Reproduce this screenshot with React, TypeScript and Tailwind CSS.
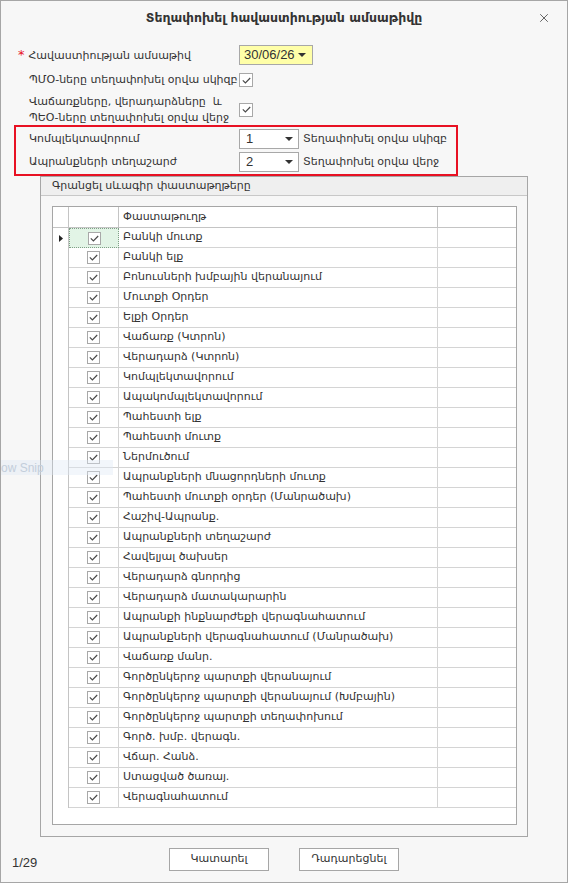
import { X } from "lucide-react";

const docs = [
  "Բանկի մուտք",
  "Բանկի ելք",
  "Բոնուսների խմբային վերանայում",
  "Մուտքի Օրդեր",
  "Ելքի Օրդեր",
  "Վաճառք (Կտրոն)",
  "Վերադարձ (Կտրոն)",
  "Կոմպլեկտավորում",
  "Ապակոմպլեկտավորում",
  "Պահեստի ելք",
  "Պահեստի մուտք",
  "Ներմուծում",
  "Ապրանքների մնացորդների մուտք",
  "Պահեստի մուտքի օրդեր (Մանրածախ)",
  "Հաշիվ-Ապրանք.",
  "Ապրանքների տեղաշարժ",
  "Հավելյալ ծախսեր",
  "Վերադարձ գնորդից",
  "Վերադարձ մատակարարին",
  "Ապրանքի ինքնարժեքի վերագնահատում",
  "Ապրանքների վերագնահատում (Մանրածախ)",
  "Վաճառք մանր.",
  "Գործընկերոջ պարտքի վերանայում",
  "Գործընկերոջ պարտքի վերանայում (Խմբային)",
  "Գործընկերոջ պարտքի տեղափոխում",
  "Գործ. խմբ. վերագն.",
  "Վճար. Հանձ.",
  "Ստացված ծառայ.",
  "Վերագնահատում",
];

const CheckBox = ({ big = false }: { big?: boolean }) => (
  <span
    className={`flex shrink-0 items-center justify-center border border-[#a8a8a8] bg-white ${
      big ? "h-[14px] w-[14px]" : "h-[13px] w-[13px]"
    }`}
  >
    <svg width="9" height="7" viewBox="0 0 9 7">
      <path d="M0.8 3.4 L3.4 5.9 L8.2 1" fill="none" stroke="#4a4a4a" strokeWidth="1.2" />
    </svg>
  </span>
);

const Arrow = () => (
  <svg width="8" height="4" viewBox="0 0 8 4" className="shrink-0">
    <path d="M0 0 H8 L4 4 Z" fill="#333" />
  </svg>
);

const Select = ({ value }: { value: string }) => (
  <div className="flex h-[20px] w-[60px] shrink-0 items-center justify-between border border-[#a8a8a8] bg-white pl-[6px] pr-[5px] font-['Liberation_Sans',sans-serif] text-[13px]">
    <span>{value}</span>
    <Arrow />
  </div>
);

const App = () => {
  return (
    <div className="relative flex h-[883px] w-[568px] flex-col border border-[#a6a6a6] bg-[#f7f7f7] font-['DejaVu_Sans','Liberation_Sans',sans-serif] text-[11px] text-[#333]">
      {/* title */}
      <div className="relative flex h-[34px] items-center justify-center">
        <span className="text-[12.5px] font-bold text-[#333]">Տեղափոխել հավաստիության ամսաթիվը</span>
        <X className="absolute right-[16px] top-[10px] text-[#444]" size={14} strokeWidth={1.4} />
      </div>

      {/* form */}
      <div className="mt-[10px] flex h-[20px] items-center">
        <div className="w-[238px] shrink-0 whitespace-nowrap pl-[17px]">
          <span className="mr-[4px] text-[13px] text-[#e81123]">*</span>
          Հավաստիության ամսաթիվ
        </div>
        <div className="flex h-[20px] w-[74px] shrink-0 items-center justify-between border border-[#a8a8a8] bg-[#ffffa8] pl-[4px] pr-[6px]">
          <span className="font-['Liberation_Sans',sans-serif] text-[13px]">30/06/26</span>
          <Arrow />
        </div>
      </div>
      <div className="mt-[5px] flex h-[20px] items-center">
        <div className="w-[238px] shrink-0 whitespace-nowrap pl-[28px]">ՊՄՕ-ները տեղափոխել օրվա սկիզբ</div>
        <CheckBox big />
      </div>
      <div className="mt-[4px] flex h-[31px] items-center">
        <div className="w-[238px] shrink-0 whitespace-nowrap pl-[28px] leading-[16px]">
          Վաճառքները, վերադարձները &nbsp;և
          <br />
          ՊԵՕ-ները տեղափոխել օրվա վերջ
        </div>
        <CheckBox big />
      </div>

      <div className="ml-[13px] w-[444px] border-2 border-[#e81123] pt-[2px] pb-[2px]">
        <div className="flex h-[20px] items-center">
          <div className="w-[223px] shrink-0 whitespace-nowrap pl-[13px]">Կոմպլեկտավորում</div>
          <Select value="1" />
          <span className="ml-[4px] whitespace-nowrap">Տեղափոխել օրվա սկիզբ</span>
        </div>
        <div className="mt-[3px] flex h-[20px] items-center">
          <div className="w-[223px] shrink-0 whitespace-nowrap pl-[13px]">Ապրանքների տեղաշարժ</div>
          <Select value="2" />
          <span className="ml-[4px] whitespace-nowrap">Տեղափոխել օրվա վերջ</span>
        </div>
      </div>

      {/* group */}
      <div className="ml-[39px] flex h-[661px] w-[488px] flex-col border border-[#a6a6a6]">
        <div className="flex h-[19px] shrink-0 items-center border-b border-[#c8c8c8] bg-[#efefef] px-[11px]">
          Գրանցել սևագիր փաստաթղթերը
        </div>
        <div className="ml-[11px] mt-[10px] flex h-[619px] w-[465px] flex-col border border-[#a6a6a6] bg-white">
          <div className="flex h-[21px] shrink-0 border-b border-[#c4c4c4]">
            <div className="w-[16px] border-r border-[#c4c4c4]" />
            <div className="w-[50px] border-r border-[#c4c4c4]" />
            <div className="flex w-[319px] items-center border-r border-[#c4c4c4] pl-[4px]">Փաստաթուղթ</div>
            <div className="flex-1" />
          </div>
          {docs.map((d, i) => (
            <div key={d} className="flex h-[20px] shrink-0">
              <div className="flex w-[16px] items-center justify-center border-r border-[#c4c4c4]">
                {i === 0 && (
                  <svg width="4" height="7" viewBox="0 0 4 7">
                    <path d="M0 0 L4 3.5 L0 7 Z" fill="#222" />
                  </svg>
                )}
              </div>
              <div
                className={`flex w-[50px] items-center justify-center border-r border-b ${
                  i === 0
                    ? "border-l border-t border-dotted border-[#7f9f86] bg-[#e2f4e6]"
                    : "border-[#d4d4d4]"
                }`}
              >
                <CheckBox />
              </div>
              <div className="flex w-[319px] items-center whitespace-nowrap border-r border-b border-[#d4d4d4] pl-[4px]">{d}</div>
              <div className="flex-1 border-b border-[#d4d4d4]" />
            </div>
          ))}
        </div>
      </div>

      {/* footer */}
      <div className="grid flex-1 grid-cols-[1fr_auto_1fr] items-center">
        <span className="pl-[11px] pt-[6px] font-['Liberation_Sans',sans-serif] text-[13px]">1/29</span>
        <div className="flex gap-[30px]">
          <button className="h-[23px] w-[100px] border border-[#a6a6a6] bg-white">Կատարել</button>
          <button className="h-[23px] w-[100px] border border-[#a6a6a6] bg-white">Դադարեցնել</button>
        </div>
        <span />
      </div>

      {/* snip ghost */}
      <div className="absolute left-0 top-[459px] flex h-[15px] w-[112px] items-center bg-[#dfe9f5]/40 font-['Liberation_Sans',sans-serif] text-[12px] text-[#c3cedb]">
        ow Snip
      </div>
    </div>
  );
};

export default App;
